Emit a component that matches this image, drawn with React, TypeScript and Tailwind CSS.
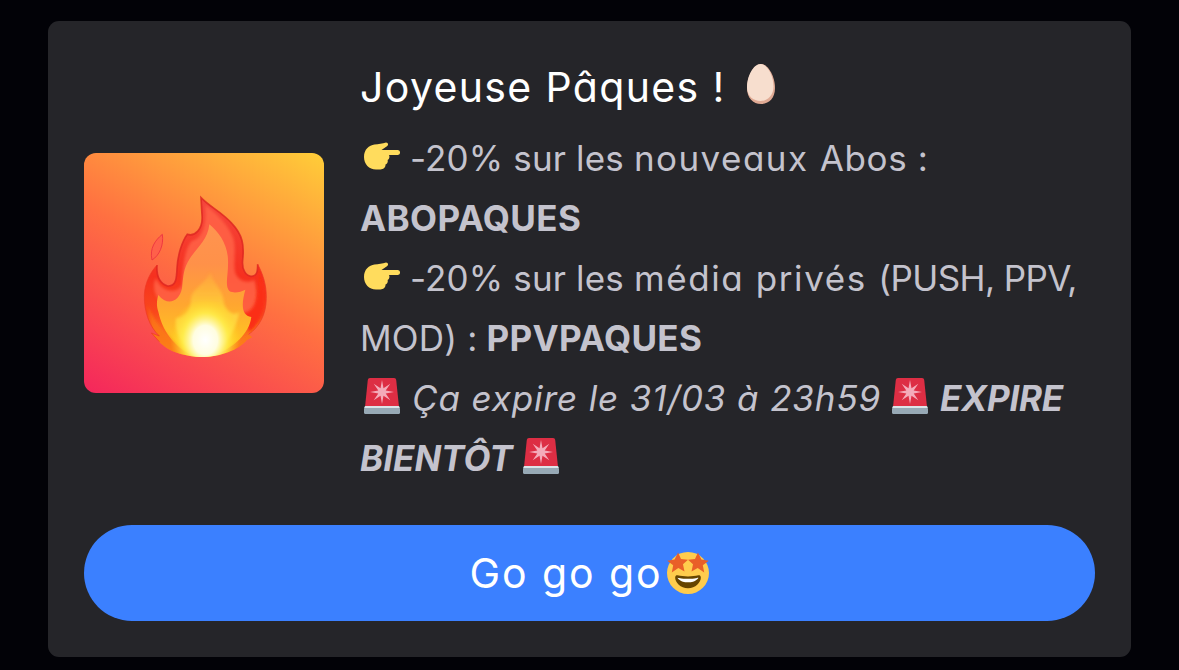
import { clsx } from "clsx";
import { ReactNode } from "react";

interface IconProps {
  className?: string;
}

const EggIcon = ({ className }: IconProps) => (
  <svg viewBox="0 0 28 40" className={clsx("shrink-0", className)}>
    <path
      d="M14 0C21 0 28 12.500 28 24C28 34 22 40 14 40S0 34 0 24C0 12.500 7 0 14 0Z"
      fill="#e0aa94"
    />
    <path
      d="M13.500 0C20.500 0 26.500 12 26.500 22.500C26.500 31.500 20.500 37 13.500 37S0 32 0 23C0 12 6.500 0 13.500 0Z"
      fill="#f7dece"
    />
  </svg>
);

const PointIcon = ({ className }: IconProps) => (
  <svg viewBox="0 0 36 28" className={clsx("h-7 w-9 shrink-0", className)}>
    <path
      d="M22 .4C24.500 .4 24.700 3.400 22.600 4.500L17.500 8H33.500C36.900 8 36.900 13 33.500 13H25C26 15 25.200 17.200 23.600 18C24.200 20 23.200 22 21.500 22.500C21.700 25.500 19.500 27.500 16.500 27.500H12C5 27.500 0 22 0 15C0 7.500 5 3.300 10.500 2.600C14.500 2.100 18.500 1.300 22 .4Z"
      fill="#ffdc5d"
    />
  </svg>
);

const SirenIcon = ({ className }: IconProps) => (
  <svg viewBox="0 0 36 36" className={clsx("size-9 shrink-0", className)}>
    <path d="M6 0H30C31.300 0 32 .8 32.200 2L35 29H1L3.800 2C4 .8 4.700 0 6 0Z" fill="#dd2e44" />
    <path
      d="M18 2L19.500 10.300L26.300 5.700L21.700 12.500L30 14L21.700 15.500L26.300 22.300L19.500 17.700L18 26L16.500 17.700L9.700 22.300L14.300 15.500L6 14L14.300 12.500L9.700 5.700L16.500 10.300Z"
      fill="#f4abba"
    />
    <path d="M1.500 28H34.500L36 30.500V34.500Q36 36 34.500 36H1.500Q0 36 0 34.500V30.500Z" fill="#97a9b5" />
    <path d="M1.500 28H34.500Q35.500 28 35.700 30H.3Q.5 28 1.500 28Z" fill="#dce3e8" />
  </svg>
);

const StarStruckIcon = ({ className }: IconProps) => (
  <svg viewBox="0 0 36 36" className={clsx("shrink-0", className)}>
    <circle cx="18" cy="18" r="18" fill="#ffcc4d" />
    <path
      d="M18 21C14.400 21 12 20.600 9 20C8.300 19.900 7 20 7 22C7 26 11.600 31 18 31S29 26 29 22C29 20 27.700 19.900 27 20C24 20.600 21.600 21 18 21Z"
      fill="#664500"
    />
    <path d="M9 22S12 23 18 23S27 22 27 22S25 26 18 26S9 22 9 22Z" fill="#fff" />
    <path
      d="M9.500 .4L12 5.900L18 6.600L13.700 10.600L15 16.800L9.700 13.800L4.100 17.500L5.300 11.300L.2 7.600L6.500 6.400Z"
      fill="#e95f28"
    />
    <path
      d="M26.500 .4L29.500 6.400L35.800 7.600L30.700 11.300L31.900 17.500L26.300 13.800L21 16.800L22.300 10.600L18 6.600L24 5.900Z"
      fill="#e95f28"
    />
  </svg>
);

const FlameArt = ({ className }: IconProps) => (
  <svg viewBox="24 24 720 720" className={className}>
    <defs>
      <linearGradient id="outer" x1="0" y1="0" x2="0" y2="1">
        <stop offset="0" stopColor="#f5483f" />
        <stop offset="0.5" stopColor="#f6301f" />
        <stop offset="0.72" stopColor="#f9481c" />
        <stop offset="1" stopColor="#ff9d20" />
      </linearGradient>
      <linearGradient id="inner" x1="0" y1="0" x2="0" y2="1">
        <stop offset="0" stopColor="#ff9450" />
        <stop offset="0.3" stopColor="#ff9149" />
        <stop offset="0.6" stopColor="#ffa630" />
        <stop offset="1" stopColor="#ffd21c" />
      </linearGradient>
      <linearGradient id="core" x1="0" y1="0" x2="0" y2="1">
        <stop offset="0" stopColor="#ffb03d" stopOpacity="0.6" />
        <stop offset="0.4" stopColor="#ffd83b" />
        <stop offset="1" stopColor="#fff36b" />
      </linearGradient>
      <radialGradient
        id="glow"
        cx="0"
        cy="0"
        r="1"
        gradientUnits="userSpaceOnUse"
        gradientTransform="translate(388 585) scale(105 125)"
      >
        <stop offset="0" stopColor="#ffffff" />
        <stop offset="0.35" stopColor="#fffde0" />
        <stop offset="0.65" stopColor="#fff04c" stopOpacity="0.75" />
        <stop offset="1" stopColor="#ffd61c" stopOpacity="0" />
      </radialGradient>
      <filter id="soft" x="-10%" y="-10%" width="120%" height="120%">
        <feGaussianBlur stdDeviation="5" />
      </filter>
      <clipPath id="flame">
        <path d="M375 158C400 185 437 200 468 236C500 270 505 300 500 345C497 375 510 392 525 394C545 394 545 375 545 358C560 385 572 420 571 460C570 510 550 545 518 568L528 577L512 585C495 607 450 633 385 636C310 635 270 612 250 590L226 564L250 573C220 545 204 500 205 450C207 410 225 380 243 360C241 390 250 415 275 423C300 425 302 400 303 370C305 330 318 290 334 268C355 275 382 255 378 210Z" />
      </clipPath>
    </defs>
    <g clipPath="url(#flame)">
      <rect x="200" y="150" width="380" height="490" fill="url(#outer)" />
      {/* paler band inside the red rim */}
      <path
        d="M388 180C420 205 455 235 472 280C482 320 470 350 478 385C490 412 515 415 535 405C550 460 548 520 500 515L260 475C230 450 230 415 240 400C255 440 300 450 318 420C320 370 325 310 348 288C375 280 392 250 388 180Z"
        fill="#ff6347"
        opacity="0.85"
        filter="url(#soft)"
      />
      <path
        d="M546 375C580 430 575 520 520 560L500 505C545 500 548 440 546 375Z"
        fill="#fb2d12"
        filter="url(#soft)"
      />
      <path
        d="M400 238C430 262 455 300 456 345C458 390 445 420 460 438C475 447 495 440 508 434C495 480 497 512 526 516C520 565 475 610 400 637H365C310 620 262 570 247 500C240 480 243 465 247 450C275 485 310 470 318 430C322 395 322 370 342 340C365 305 395 285 400 238Z"
        fill="url(#inner)"
      />
      <path
        d="M403 382C412 420 440 430 443 470C448 500 475 515 490 500C480 560 440 610 405 637H365C325 610 295 570 300 520C335 515 345 485 345 460C350 430 385 420 403 382Z"
        fill="url(#core)"
        opacity="0.75"
        filter="url(#soft)"
      />
      {/* orange tongues on both sides of the base */}
      <path
        d="M215 480C235 540 300 600 352 637L230 640V560ZM560 520C530 575 460 605 418 637L530 640Z"
        fill="#fb7a14"
        opacity="0.75"
        filter="url(#soft)"
      />
      <rect x="260" y="450" width="260" height="190" fill="url(#glow)" />
    </g>
    <path
      d="M243 360C241 390 250 415 275 423C300 425 302 400 303 370C305 330 318 290 334 268C355 275 382 255 378 210L375 158C400 185 437 200 468 236C500 270 505 300 500 345C497 375 510 392 525 394C545 394 545 375 545 358"
      fill="none"
      stroke="#dc2420"
      strokeWidth="5"
      opacity="0.8"
    />
    <path
      d="M243 360C225 380 207 410 205 450C204 500 220 545 250 573L226 564L250 590M545 358C560 385 572 420 571 460C570 510 550 545 518 568"
      fill="none"
      stroke="#ef3b25"
      strokeWidth="3"
      opacity="0.7"
    />
    <path
      d="M259 268C238 285 220 310 228 345C250 332 264 300 259 268Z"
      fill="#ff604a"
      stroke="#ee3942"
      strokeWidth="3"
    />
  </svg>
);

interface TextProps {
  children: ReactNode;
  className?: string;
}

const Run = ({ children, className }: TextProps) => (
  <span className={clsx("whitespace-pre", className)}>{children}</span>
);

const Line = ({ children, className }: TextProps) => (
  <div className={clsx("flex h-[60px] items-center", className)}>{children}</div>
);

export default function App() {
  return (
    <main className="h-[670px] w-[1179px] overflow-hidden bg-[#020207] px-12 pt-[21px] font-['Inter','Liberation_Sans',sans-serif] [font-feature-settings:'cv11']">
      <section className="rounded-[11px] bg-[#252529] p-9">
        <div className="flex items-center gap-9">
          <div className="size-60 shrink-0 overflow-hidden rounded-xl bg-[linear-gradient(30deg,#f4265c_0%,#ff7041_50%,#ffce38_100%)]">
            <FlameArt className="size-full" />
          </div>
          <div className="flex flex-1 flex-col gap-3">
            <h1 className="flex h-[60px] items-center text-[41px] text-white">
              <Run className="mt-0.5 tracking-[1.35px]">Joyeuse Pâques !</Run>
              <EggIcon className="mb-1.5 ml-[21px] h-10 w-7" />
            </h1>
            <div className="text-[35px] text-[#c4c3cd]">
              <Line>
                <PointIcon className="mb-1.5 ml-1" />
                <Run className="mb-0.5 ml-2.5 tracking-[0.15px]">-20% sur les </Run>
                <Run className="mb-0.5 tracking-[1.45px]">nouveaux </Run>
                <Run className="mb-0.5 tracking-[0.6px]">Abos :</Run>
              </Line>
              <Line className="font-bold">
                <Run className="mb-0.5 tracking-[0.4px]">ABOPAQUES</Run>
              </Line>
              <Line>
                <PointIcon className="mb-1.5 ml-1" />
                <Run className="mb-0.5 ml-2.5 tracking-[0.15px]">-20% sur les </Run>
                <Run className="mb-0.5 tracking-[1.6px]">média privés </Run>
                <Run className="mb-0.5 tracking-[-0.6px]">(PUSH, PPV,</Run>
              </Line>
              <Line>
                <Run className="mb-0.5 tracking-[0.2px]">MOD) :</Run>
                <Run className="mb-0.5 ml-[9px] font-bold tracking-[0.3px]">PPVPAQUES</Run>
              </Line>
              <Line className="italic">
                <SirenIcon className="mb-1.5 ml-1" />
                <Run className="mb-0.5 ml-3 tracking-[0.88px]">Ça expire le 31/03 à 23h59</Run>
                <SirenIcon className="mb-1.5 ml-[11px]" />
                <Run className="mb-0.5 ml-3 font-bold tracking-[-0.2px]">EXPIRE</Run>
              </Line>
              <Line className="italic">
                <Run className="mb-0.5 font-bold">BIENTÔT</Run>
                <SirenIcon className="mb-1.5 ml-2.5" />
              </Line>
            </div>
          </div>
        </div>
        <button className="mt-9 flex h-24 w-full items-center justify-center gap-[5px] rounded-full bg-[#3b80ff] text-[41px] text-white">
          <Run className="mt-0.5 tracking-[1.9px]">Go go go</Run>
          <StarStruckIcon className="size-[42px]" />
        </button>
      </section>
    </main>
  );
}
